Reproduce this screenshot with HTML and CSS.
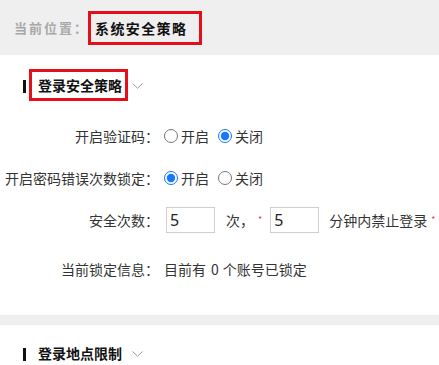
FILE: index.html
```html
<!DOCTYPE html>
<html lang="zh-CN">
<head>
<meta charset="utf-8">
<title>系统安全策略</title>
<link rel="stylesheet" href="styles.css">
</head>
<body>
<header class="crumbs">
  <span class="crumb-label">当前位置：</span>
  <span class="crumb-current">系统安全策略</span>
</header>

<section class="panel">
  <div class="panel-head">
    <i class="bar"></i>
    <h2 class="panel-title hl">登录安全策略</h2>
    <svg class="chev" width="11" height="6" viewBox="0 0 11 6"><polyline points="0.5,0.5 5.5,5.2 10.5,0.5" fill="none" stroke="#9a9a9a" stroke-width="1"/></svg>
  </div>
  <div class="form">
    <div class="row">
      <span class="row-label">开启验证码：</span>
      <div class="row-value">
        <label class="radio"><input type="radio" name="captcha">开启</label>
        <label class="radio"><input type="radio" name="captcha" checked>关闭</label>
      </div>
    </div>
    <div class="row">
      <span class="row-label">开启密码错误次数锁定：</span>
      <div class="row-value">
        <label class="radio"><input type="radio" name="lock" checked>开启</label>
        <label class="radio"><input type="radio" name="lock">关闭</label>
      </div>
    </div>
    <div class="row">
      <span class="row-label">安全次数：</span>
      <div class="row-value">
        <input class="num first" type="text" value="5">
        <span class="txt times">次，</span><span class="req">*</span>
        <input class="num" type="text" value="5">
        <span class="txt minutes">分钟内禁止登录</span><span class="req">*</span>
      </div>
    </div>
    <div class="row row-gap">
      <span class="row-label">当前锁定信息：</span>
      <div class="row-value">
        <span class="txt">目前有<span class="count">0</span>个账号已锁定</span>
      </div>
    </div>
  </div>
</section>

<div class="divider"></div>

<section class="panel panel-2">
  <div class="panel-head">
    <i class="bar"></i>
    <h2 class="panel-title">登录地点限制</h2>
    <svg class="chev" width="11" height="6" viewBox="0 0 11 6"><polyline points="0.5,0.5 5.5,5.2 10.5,0.5" fill="none" stroke="#9a9a9a" stroke-width="1"/></svg>
  </div>
</section>
</body>
</html>
```

FILE: styles.css
```css
* { box-sizing: border-box; }

html, body {
  margin: 0;
  padding: 0;
  background: #fff;
  font-family: "Noto Sans CJK SC", "Noto Sans", sans-serif;
  color: #333;
  overflow: hidden;
}

.crumbs {
  height: 55px;
  background: #efefef;
  display: flex;
  align-items: center;
  padding-left: 14px;
}

.crumb-label {
  font-size: 13px;
  font-weight: bold;
  letter-spacing: 2px;
  color: #a8a8a8;
  width: 74px;
  white-space: nowrap;
}

.crumb-current {
  height: 34px;
  line-height: 28px;
  border: 3px solid #e3101a;
  padding: 0 12px 0 4px;
  font-size: 14px;
  font-weight: bold;
  letter-spacing: 1.4px;
  color: #111;
}

.panel {
  padding: 14px 0 25px;
}

.panel-2 {
  padding: 12px 0 0;
}

.panel-head {
  display: flex;
  align-items: center;
  height: 32px;
  padding-left: 23px;
}

.bar {
  display: block;
  width: 3px;
  height: 13px;
  background: #111;
  margin-right: 3px;
  margin-top: 2px;
}

.panel-title {
  margin: 0;
  height: 32px;
  line-height: 26px;
  border: 3px solid transparent;
  padding: 0 3px 0 6px;
  font-size: 14px;
  font-weight: bold;
  color: #111;
}

.panel-title.hl {
  border-color: #e3101a;
}

.chev {
  display: block;
  margin-left: 4px;
  margin-top: 2px;
}

.form {
  margin-top: 14px;
}

.row {
  display: flex;
  align-items: center;
  height: 42px;
  font-size: 14px;
}

.row-gap {
  margin-top: 7px;
}

.row-label {
  flex: none;
  width: 159px;
  text-align: right;
  white-space: nowrap;
  color: #333;
}

.row-value {
  flex: none;
  display: flex;
  align-items: center;
  margin-left: 5px;
  white-space: nowrap;
}

.radio {
  display: flex;
  align-items: center;
  margin-right: 9px;
  color: #333;
}

.radio input {
  width: 14px;
  height: 14px;
  margin: 0 3px 0 0;
  accent-color: #1677ff;
}

.num {
  flex: none;
  width: 49px;
  height: 26px;
  border: 1px solid #cfcfcf;
  padding: 0 0 0 3px;
  font-family: "Noto Sans", sans-serif;
  font-size: 16px;
  color: #222;
  outline: none;
}

.num.first {
  margin-left: 2px;
}

.times {
  margin-left: 11px;
}

.minutes {
  margin-left: 10px;
}

.count {
  margin: 0 4px 0 5px;
}

.req {
  color: #e8395a;
  font-size: 9px;
  margin: -1px 8px 0 4px;
}

.divider {
  height: 10px;
  background: #eeeeee;
}
```
